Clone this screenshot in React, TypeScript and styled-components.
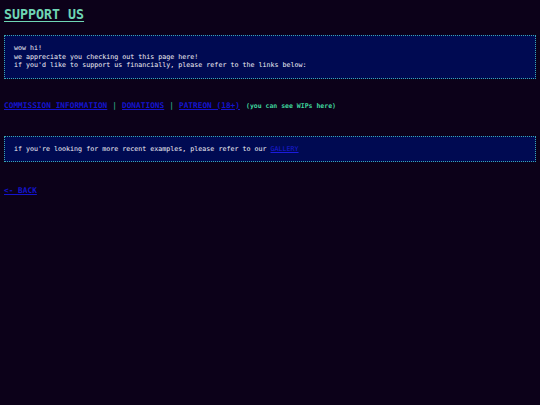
import styled, { createGlobalStyle } from "styled-components";

const GlobalStyle = createGlobalStyle`
    html, body {
        margin: 0;
        padding: 0;
        background-color: #0c0119;
    }
    body {
        font-family: "DejaVu Sans Mono", "Liberation Mono", monospace;
        color: #f0f0f6;
    }
`

const Page = styled.main`
    padding: 6px 4px;
`

const Title = styled.h1`
    margin: 0 0 11px;
    font-size: 13.3px;
    font-weight: bold;
    line-height: 18px;
    color: #6fd6b4;
    text-decoration: underline;
    text-underline-offset: 2px;
`

const Panel = styled.section`
    background-color: #000a52;
    border: 1px dotted #3aa7b0;
    padding: 8px 9px;
    font-size: 6.67px;
    line-height: 8.5px;
    white-space: pre-line;
`

const LinkRow = styled.nav`
    display: flex;
    align-items: baseline;
    margin: 21px 0 24px;
    font-size: 7.8px;
    line-height: 12px;
`

const NavLink = styled.a`
    color: #1414cc;
    font-weight: bold;
    text-decoration: underline;
`

const Divider = styled.span`
    color: #2a9a78;
    font-weight: bold;
    margin: 0 5px;
`

const Note = styled.span`
    color: #3fd49c;
    font-weight: bold;
    font-size: 6.5px;
    margin-left: 6px;
`

const InlineLink = styled.a`
    color: #1c1cdd;
    text-decoration: underline;
`

const Back = styled.a`
    display: inline-block;
    margin-top: 24px;
    font-size: 7.8px;
    font-weight: bold;
    color: #1414cc;
    text-decoration: underline;
`

export default function App() {
    return (
        <>
            <GlobalStyle/>
            <Page>
                <Title>SUPPORT US</Title>
                <Panel>
                    {"wow hi!\nwe appreciate you checking out this page here!\nif you'd like to support us financially, please refer to the links below:"}
                </Panel>
                <LinkRow>
                    <NavLink href="#">COMMISSION INFORMATION</NavLink>
                    <Divider>|</Divider>
                    <NavLink href="#">DONATIONS</NavLink>
                    <Divider>|</Divider>
                    <NavLink href="#">PATREON (18+)</NavLink>
                    <Note>(you can see WIPs here)</Note>
                </LinkRow>
                <Panel>
                    if you're looking for more recent examples, please refer to our <InlineLink href="#">GALLERY</InlineLink>
                </Panel>
                <Back href="#">&lt;- BACK</Back>
            </Page>
        </>
    );
}
